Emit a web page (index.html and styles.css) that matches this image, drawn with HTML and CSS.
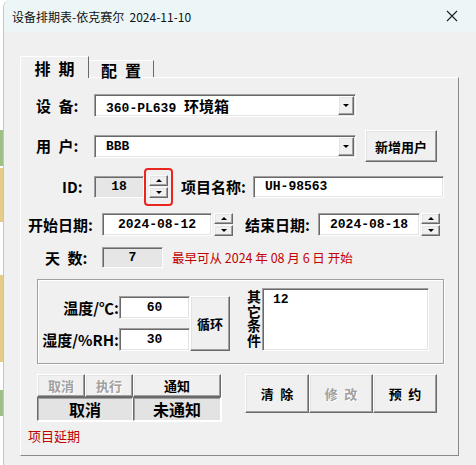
FILE: index.html
```html
<!DOCTYPE html>
<html>
<head>
    <title>设备排期表</title>
    <link rel="stylesheet" href="styles.css">
</head>
<body>
<div class="win">
    <div class="titlebar">
        <span class="title">设备排期表-依克赛尔&nbsp;&nbsp;2024-11-10</span>
        <svg class="close" width="12" height="12" viewBox="0 0 12 12"><path d="M1 1L11 11M11 1L1 11" stroke="#1f1f1f" stroke-width="1.1" fill="none"/></svg>
    </div>
    <div class="tabs">
        <div class="tab tab-active">排&ensp;期</div>
        <div class="tab">配&ensp;置</div>
    </div>
    <div class="panel">
        <div class="row row-device">
            <span class="lbl lbl-main">设&ensp;备:</span>
            <div class="combo sunken">
                <span class="val">360-PL639 <span class="cn">环境箱</span></span>
                <span class="drop raised"></span>
            </div>
        </div>
        <div class="row row-user">
            <span class="lbl lbl-main">用&ensp;户:</span>
            <div class="combo sunken">
                <span class="val">BBB</span>
                <span class="drop raised"></span>
            </div>
            <button class="btn raised btn-adduser">新增用户</button>
        </div>
        <div class="row row-id">
            <span class="lbl lbl-id">ID:</span>
            <div class="box sunken box-id">18</div>
            <div class="spin-mark">
                <div class="spin">
                    <span class="spin-up raised"></span>
                    <span class="spin-down raised"></span>
                </div>
            </div>
            <span class="lbl lbl-project">项目名称:</span>
            <div class="box sunken box-project">UH-98563</div>
        </div>
        <div class="row row-date">
            <span class="lbl lbl-start">开始日期:</span>
            <div class="box sunken box-start">2024-08-12</div>
            <div class="spin spin-start">
                <span class="spin-up raised"></span>
                <span class="spin-down raised"></span>
            </div>
            <span class="lbl lbl-end">结束日期:</span>
            <div class="box sunken box-end">2024-08-18</div>
            <div class="spin spin-end">
                <span class="spin-up raised"></span>
                <span class="spin-down raised"></span>
            </div>
        </div>
        <div class="row row-days">
            <span class="lbl lbl-days">天&ensp;数:</span>
            <div class="box sunken box-days">7</div>
            <span class="hint">最早可从 2024 年 08 月 6 日 开始</span>
        </div>
        <div class="group">
            <div class="cond">
                <div class="cond-row">
                    <span class="lbl lbl-cond">温度/℃:</span>
                    <div class="box sunken box-cond">60</div>
                </div>
                <div class="cond-row">
                    <span class="lbl lbl-cond">湿度/%RH:</span>
                    <div class="box sunken box-cond">30</div>
                </div>
            </div>
            <button class="btn raised btn-loop">循环</button>
            <span class="vlbl">其它条件</span>
            <div class="memo sunken">12</div>
        </div>
        <div class="actions">
            <div class="notify">
                <button class="btn raised btn-sm disabled">取消</button>
                <button class="btn raised btn-sm disabled">执行</button>
                <button class="btn raised btn-sm">通知</button>
                <div class="state state-wide">取消</div>
                <div class="state">未通知</div>
            </div>
            <div class="ops">
                <button class="btn raised btn-op">清&ensp;除</button>
                <button class="btn raised btn-op disabled">修&ensp;改</button>
                <button class="btn raised btn-op">预&ensp;约</button>
            </div>
        </div>
        <div class="delay">项目延期</div>
    </div>
</div>
</body>
</html>
```

FILE: styles.css
```css
body {
    margin: 0;
    font-family: "Noto Sans CJK SC", sans-serif;
    background: linear-gradient(to bottom,
        #ffffff 0 130px, #9fbf88 130px 166px, #ffffff 166px 168px,
        #e3cb88 168px 222px, #ffffff 222px 275px, #e3cb88 275px 362px,
        #ffffff 362px 390px, #9fbf88 390px 416px, #ffffff 416px);
}
.win {
    margin-left: 3px;
    height: 465px;
    background: #f0f0f0;
    border-left: 1px solid #c4c4c4;
    border-top-left-radius: 8px;
    box-sizing: border-box;
    overflow: hidden;
}
.titlebar {
    height: 32px;
    background: #ecf6f7;
    display: flex;
    align-items: center;
    padding: 0 18px 0 8px;
}
.title {
    font-size: 12px;
    color: #111;
}
.close {
    margin-left: auto;
}

/* tabs */
.tabs {
    display: flex;
    align-items: flex-end;
    margin: 24px 0 0 16px;
    height: 21px;
}
.tab {
    box-sizing: border-box;
    height: 17px;
    width: 65px;
    border-top: 1px solid #fff;
    border-right: 1px solid #696969;
    font-size: 16px;
    font-weight: 700;
    line-height: 16px;
    text-align: center;
    padding-top: 1px;
}
.tab-active {
    position: relative;
    width: 69px;
    height: 22px;
    margin-bottom: -1px;
    border-left: 1px solid #fff;
    background: #f0f0f0;
    padding-top: 3px;
}
.panel {
    margin-left: 16px;
    width: 439px;
    height: 379px;
    border: 1px solid;
    border-color: #fff #8a8a8a #8a8a8a #fff;
    box-sizing: border-box;
}

/* 3d borders */
.sunken {
    border: 1px solid;
    border-color: #a0a0a0 #fff #fff #a0a0a0;
    box-shadow: inset 1px 1px #696969, inset -1px -1px #e3e3e3;
    box-sizing: border-box;
}
.raised {
    border: 1px solid;
    border-color: #fff #696969 #696969 #fff;
    box-shadow: inset -1px -1px #a0a0a0, inset 1px 1px #e3e3e3;
    background: #f0f0f0;
    box-sizing: border-box;
}

.row {
    display: flex;
    align-items: center;
}
.lbl {
    flex: none;
    box-sizing: border-box;
    font-size: 15px;
    font-weight: 700;
    line-height: 18px;
    white-space: nowrap;
    color: #000;
}
.box {
    flex: none;
    display: flex;
    align-items: center;
    justify-content: center;
    font: bold 13px "Liberation Mono", "Noto Sans CJK SC", monospace;
    color: #000;
    background: #fff;
}
.cn {
    font-family: "Noto Sans CJK SC", sans-serif;
    font-size: 15px;
}

.row-device {
    margin-top: 16px;
    height: 23px;
}
.lbl-main {
    width: 73px;
    padding-left: 15px;
}
.combo {
    flex: none;
    width: 262px;
    height: 23px;
    background: #fff;
    display: flex;
    align-items: center;
}
.val {
    flex: 1;
    padding-left: 11px;
    font: bold 13px "Liberation Mono", "Noto Sans CJK SC", monospace;
}
.drop {
    width: 16px;
    height: 19px;
    margin-right: 1px;
    display: flex;
    align-items: center;
    justify-content: center;
}
.drop::after {
    content: "";
    border-left: 3px solid transparent;
    border-right: 3px solid transparent;
    border-top: 3px solid #000;
}

.row-user {
    margin-top: 13px;
    height: 32px;
}
.btn {
    flex: none;
    padding: 0;
    font-family: "Noto Sans CJK SC", sans-serif;
    font-weight: 700;
    font-size: 13px;
    color: #000;
    cursor: pointer;
}
.btn.disabled {
    color: #a0a0a0;
    text-shadow: 1px 1px #fff;
}
.btn-adduser {
    margin-left: 9px;
    width: 72px;
    height: 32px;
}

.row-id {
    margin-top: 5px;
    height: 39px;
}
.lbl-id {
    width: 73px;
    padding-left: 41px;
}
.box-id {
    width: 50px;
    height: 22px;
    background: #e6e6e6;
}
.spin-mark {
    flex: none;
    width: 29px;
    height: 38px;
    border: 2px solid #e8261f;
    border-radius: 4px;
    box-sizing: border-box;
    display: flex;
    align-items: center;
    justify-content: center;
}
.spin {
    flex: none;
    display: flex;
    flex-direction: column;
    gap: 1px;
}
.spin span {
    width: 19px;
    height: 11px;
    display: flex;
    align-items: center;
    justify-content: center;
}
.spin-up::after {
    content: "";
    border-left: 3px solid transparent;
    border-right: 3px solid transparent;
    border-bottom: 3px solid #000;
}
.spin-down::after {
    content: "";
    border-left: 3px solid transparent;
    border-right: 3px solid transparent;
    border-top: 3px solid #000;
}
.lbl-project {
    margin-left: 8px;
    width: 72px;
}
.box-project {
    width: 191px;
    height: 22px;
    justify-content: flex-start;
    padding-left: 11px;
}

.row-date {
    margin-top: 7px;
    height: 23px;
}
.lbl-start {
    width: 81px;
    padding-left: 7px;
}
.box-start {
    width: 110px;
    height: 23px;
}
.spin-start {
    margin-left: 2px;
}
.lbl-end {
    margin-left: 12px;
    width: 73px;
}
.box-end {
    width: 102px;
    height: 23px;
}
.spin-end {
    margin-left: 1px;
}

.row-days {
    margin-top: 11px;
    height: 21px;
}
.lbl-days {
    width: 81px;
    padding-left: 24px;
}
.box-days {
    width: 61px;
    height: 21px;
    background: #e6e6e6;
}
.hint {
    margin-left: 9px;
    color: #c00000;
    font-size: 12.5px;
}

/* conditions group */
.group {
    margin: 11px 0 0 16px;
    width: 407px;
    height: 85px;
    border: 1px solid #a0a0a0;
    box-shadow: inset 1px 1px #fff, 1px 1px #fff;
    box-sizing: border-box;
    display: flex;
    align-items: flex-start;
    padding-top: 8px;
}
.cond {
    margin-top: 8px;
    display: flex;
    flex-direction: column;
    gap: 9px;
}
.cond-row {
    display: flex;
    align-items: center;
    height: 23px;
}
.lbl-cond {
    width: 81px;
    text-align: right;
}
.box-cond {
    width: 71px;
    height: 23px;
}
.btn-loop {
    margin-top: 8px;
    width: 40px;
    height: 55px;
}
.vlbl {
    flex: none;
    margin: 2px 0 0 16px;
    width: 15px;
    writing-mode: vertical-rl;
    text-orientation: upright;
    font-size: 14px;
    font-weight: 700;
    line-height: 15px;
    letter-spacing: 0.5px;
}
.memo {
    flex: none;
    margin-left: 1px;
    width: 167px;
    height: 63px;
    background: #fff;
    padding: 3px 10px;
    font: bold 13px "Liberation Mono", monospace;
}

/* buttons */
.actions {
    display: flex;
    align-items: flex-start;
    margin: 10px 0 0 16px;
}
.notify {
    display: grid;
    grid-template-columns: 48px 48px 88px;
    grid-template-rows: 23px 24px;
    width: 184px;
    box-shadow: 1px 1px #fff;
}
.btn-sm {
    width: auto;
    height: 23px;
}
.state {
    display: flex;
    align-items: center;
    justify-content: center;
    background: #e3e3e3;
    border: 1px solid;
    border-color: #696969 #fff #fff #696969;
    box-shadow: inset 1px 1px #a0a0a0;
    font-size: 16px;
    font-weight: 700;
}
.state-wide {
    grid-column: span 2;
}
.ops {
    margin-left: 24px;
    display: flex;
}
.btn-op {
    width: 64px;
    height: 39px;
}
.delay {
    margin-top: 6px;
    padding-left: 7px;
    color: #c00000;
    font-size: 13px;
    line-height: 18px;
}
```
